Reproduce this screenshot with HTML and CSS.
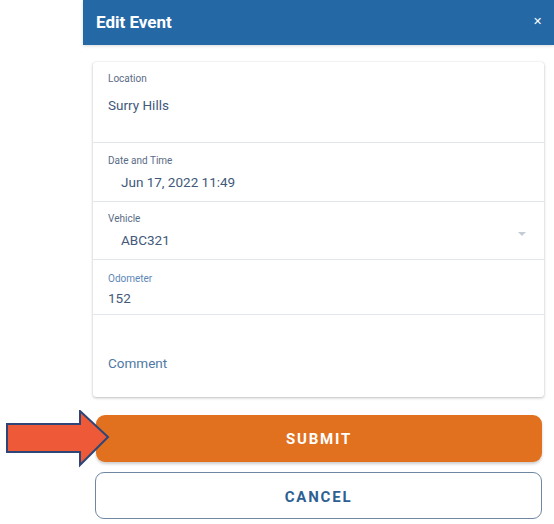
FILE: index.html
```html
<!DOCTYPE html>
<html>
<head>
<meta charset="utf-8">
<link rel="stylesheet" href="styles.css">
</head>
<body>
<div class="dialog">
  <div class="header">
    <span class="title">Edit Event</span>
    <span class="close">&#x2715;</span>
  </div>
  <div class="card">
    <div class="field f-location">
      <div class="label">Location</div>
      <div class="value">Surry Hills</div>
    </div>
    <div class="field f-date">
      <div class="label">Date and Time</div>
      <div class="value indent">Jun 17, 2022 11:49</div>
    </div>
    <div class="field f-vehicle">
      <div class="label">Vehicle</div>
      <div class="value indent">ABC321</div>
      <span class="caret"></span>
    </div>
    <div class="field f-odo">
      <div class="label blue">Odometer</div>
      <div class="value">152</div>
    </div>
    <div class="field f-comment">
      <div class="placeholder">Comment</div>
    </div>
  </div>
  <div class="actions">
    <button class="btn submit">SUBMIT</button>
    <button class="btn cancel">CANCEL</button>
  </div>
</div>
<svg class="arrow" width="112" height="60" viewBox="0 0 112 60">
  <path d="M7 14 H80 V1 L108 27 L80 55 V42 H7 Z" fill="#ee5a37" stroke="#2e4677" stroke-width="2" stroke-linejoin="miter"/>
</svg>
</body>
</html>
```
FILE: styles.css
```css
* { box-sizing: border-box; }
html, body { margin: 0; padding: 0; background: #fff; }
body {
  font-family: Roboto, "Liberation Sans", sans-serif;
  width: 554px;
  height: 524px;
  position: relative;
  overflow: hidden;
}
.dialog {
  margin-left: 83px;
  width: 471px;
}
.header {
  height: 45px;
  background: #2468a6;
  color: #fff;
  display: flex;
  align-items: center;
  justify-content: space-between;
  padding: 0 12px 0 13px;
  box-shadow: 0 1px 3px rgba(0,0,0,0.15);
}
.title {
  font-size: 17px;
  font-weight: 700;
  margin-top: -2px;
}
.close {
  font-size: 11px;
  font-weight: 400;
  margin-top: -2px;
}
.card {
  margin: 17px 10px 0 10px;
  background: #fff;
  border-radius: 3px;
  box-shadow: 0 1px 3px rgba(0,0,0,0.25), 0 0 1px rgba(0,0,0,0.12);
}
.field {
  position: relative;
  border-bottom: 1px solid #e3e6ea;
  padding-left: 15px;
}
.field:last-child { border-bottom: none; }
.label {
  font-size: 10px;
  color: #5a6b85;
  line-height: 14px;
}
.label.blue { color: #5c87b8; }
.value {
  font-size: 13.5px;
  color: #43597a;
  line-height: 18px;
}
.value.indent { padding-left: 13px; }
.f-location { height: 81px; padding-top: 10px; }
.f-location .value { margin-top: 10px; }
.f-date { height: 59px; padding-top: 11px; }
.f-date .value { margin-top: 5px; }
.f-vehicle { height: 58px; padding-top: 10px; }
.f-vehicle .value { margin-top: 5px; }
.f-odo { height: 55px; padding-top: 12px; }
.f-odo .value { margin-top: 3px; }
.f-comment { height: 82px; padding-top: 39px; }
.placeholder {
  font-size: 13.5px;
  color: #5079a5;
  line-height: 18px;
}
.caret {
  position: absolute;
  right: 18px;
  top: 30px;
  width: 0;
  height: 0;
  border-left: 4px solid transparent;
  border-right: 4px solid transparent;
  border-top: 4px solid #c5ccd6;
}
.actions {
  margin: 18px 12px 0 12px;
  display: flex;
  flex-direction: column;
  gap: 10px;
}
.btn {
  height: 47px;
  border-radius: 9px;
  font-family: Roboto, "Liberation Sans", sans-serif;
  font-size: 15px;
  font-weight: 700;
  letter-spacing: 1.8px;
  cursor: pointer;
}
.submit {
  background: #e2711f;
  color: #fff;
  border: none;
  box-shadow: 0 2px 3px rgba(0,0,0,0.2);
  margin-left: 1px;
}
.cancel {
  background: #fff;
  color: #2e5f93;
  border: 1px solid #6f87a3;
  padding-top: 3px;
}
.arrow {
  position: absolute;
  left: 0;
  top: 410px;
}
```
